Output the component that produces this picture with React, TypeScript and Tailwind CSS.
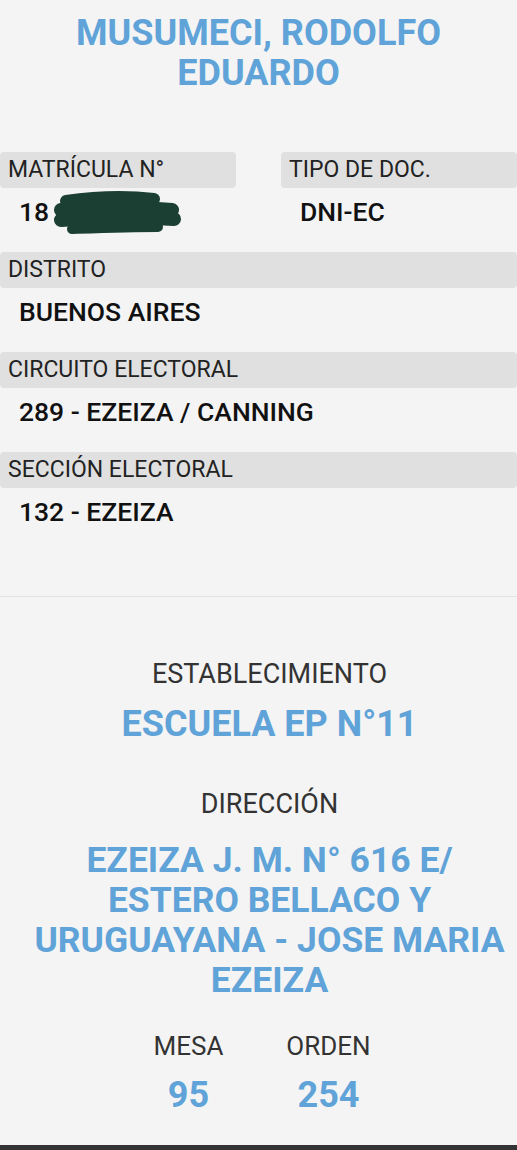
import React from 'react'

type Field = { label: string; value: string }

const rows: Field[] = [
  { label: 'DISTRITO', value: 'BUENOS AIRES' },
  { label: 'CIRCUITO ELECTORAL', value: '289 - EZEIZA / CANNING' },
  { label: 'SECCIÓN ELECTORAL', value: '132 - EZEIZA' },
]

function Label({ children }: { children: React.ReactNode }) {
  return (
    <div className="h-9 rounded-[4px] bg-[#e0e0e0] pl-2 text-[23px] leading-9 text-[#222]">
      {children}
    </div>
  )
}

function Value({ children }: { children: React.ReactNode }) {
  return (
    <div className="relative h-16 pl-[19px] pt-[8px] text-[26.5px] leading-8 font-medium text-[#111]">
      {children}
    </div>
  )
}

// tachado a mano sobre el número de matrícula
function Scribble() {
  return (
    <svg
      className="absolute left-[54px] top-[3px]"
      width="128"
      height="46"
      viewBox="0 0 128 46"
    >
      <g stroke="#1c3f34" strokeLinecap="round" fill="none">
        <path d="M12 10 C40 6 74 5 100 8" strokeWidth="12" />
        <path d="M7 19 C46 15 86 16 118 19" strokeWidth="14" />
        <path d="M7 29 C46 26 86 26 120 28" strokeWidth="14" />
        <path d="M18 38 C48 37 76 36 104 36" strokeWidth="10" />
      </g>
    </svg>
  )
}

export default function App() {
  return (
    <div
      className="flex min-h-[1150px] w-[517px] flex-col bg-[#f4f4f4]"
      style={{ fontFamily: 'Roboto, "Noto Sans", sans-serif' }}
    >
      <h1 className="px-6 pt-[13px] text-center text-[36px] leading-10 font-bold text-[#5fa3d8]">
        MUSUMECI, RODOLFO EDUARDO
      </h1>

      <div className="mt-[59px] grid grid-cols-2 gap-x-[45px]">
        <div>
          <Label>MATRÍCULA N°</Label>
          <Value>
            18
            <Scribble />
          </Value>
        </div>
        <div>
          <Label>TIPO DE DOC.</Label>
          <Value>DNI-EC</Value>
        </div>
      </div>

      {rows.map((r) => (
        <div key={r.label}>
          <Label>{r.label}</Label>
          <Value>{r.value}</Value>
        </div>
      ))}

      <div className="mt-[44px] h-px bg-[#e2e2e2]" />

      <div className="flex flex-col items-center pl-[24px] pr-[2px] text-center">
        <div className="mt-[61px] text-[27px] leading-8 text-[#333]">ESTABLECIMIENTO</div>
        <div className="mt-[14px] text-[36px] leading-10 font-bold text-[#5fa3d8]">
          ESCUELA EP N°11
        </div>

        <div className="mt-[44px] text-[27px] leading-8 text-[#333]">DIRECCIÓN</div>
        <div className="mt-[20px] text-[35.5px] leading-10 font-bold text-[#5fa3d8]">
          EZEIZA J. M. N° 616 E/ ESTERO BELLACO Y URUGUAYANA - JOSE MARIA EZEIZA
        </div>
      </div>

      <div className="mt-[30px] flex justify-center">
        <div className="flex w-[140px] flex-col items-center">
          <div className="text-[26px] leading-8 text-[#333]">MESA</div>
          <div className="mt-[13px] text-[36px] leading-10 font-bold text-[#5fa3d8]">95</div>
        </div>
        <div className="flex w-[140px] flex-col items-center">
          <div className="text-[26px] leading-8 text-[#333]">ORDEN</div>
          <div className="mt-[13px] text-[36px] leading-10 font-bold text-[#5fa3d8]">254</div>
        </div>
      </div>

      <div className="flex-1" />
      <div className="h-[5px] bg-[#333]" />
    </div>
  )
}
